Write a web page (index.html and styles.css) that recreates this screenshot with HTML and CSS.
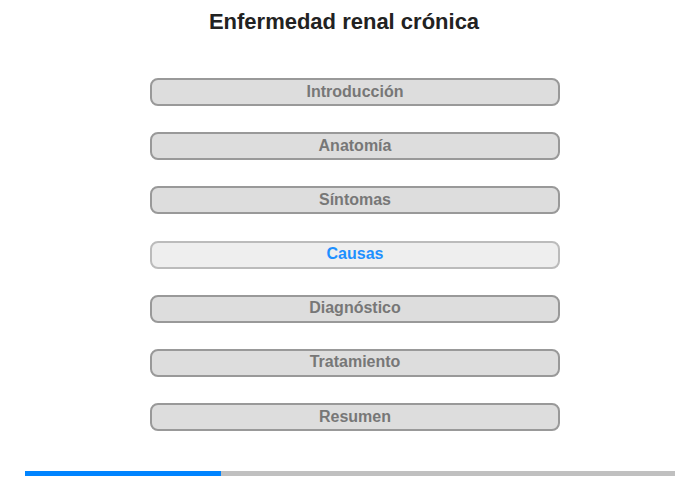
FILE: index.html
```html
<!DOCTYPE html>
<html lang="es">
<head>
  <meta charset="UTF-8" />
  <title>Enfermedad renal crónica</title>
  <link rel="stylesheet" href="styles.css">
</head>
<body>
  <h1>Enfermedad renal crónica</h1>

  <div class="menu">
    <button class="item">Introducción</button>
    <button class="item">Anatomía</button>
    <button class="item">Síntomas</button>
    <button class="item active">Causas</button>
    <button class="item">Diagnóstico</button>
    <button class="item">Tratamiento</button>
    <button class="item">Resumen</button>
  </div>

  <div class="progress">
    <div class="progress-fill" style="width: 30.2%"></div>
  </div>
</body>
</html>
```

FILE: styles.css
```css
body {
  margin: 0;
  font-family: "Liberation Sans", Arial, sans-serif;
  background: #fff;
  width: 700px;
  height: 480px;
  display: flex;
  flex-direction: column;
  align-items: center;
}

h1 {
  font-size: 22px;
  line-height: 24px;
  color: #222;
  margin: 10px 12px 0 0;
}

.menu {
  margin: 44px 0 0 10px;
  display: flex;
  flex-direction: column;
  gap: 26.2px;
}

.item {
  width: 410px;
  height: 28px;
  border: 2px solid #999;
  border-radius: 8px;
  background: #ddd;
  color: #777;
  font-family: "Liberation Sans", Arial, sans-serif;
  font-size: 16px;
  font-weight: bold;
  padding: 0 0 1px;
  cursor: pointer;
}

.item.active {
  border-color: #bbb;
  background: #eee;
  color: #1e90ff;
}

.progress {
  margin-top: auto;
  margin-bottom: 4px;
  width: 650px;
  height: 5px;
  background: #c0c0c0;
}

.progress-fill {
  height: 100%;
  background: #0084ff;
}
```
